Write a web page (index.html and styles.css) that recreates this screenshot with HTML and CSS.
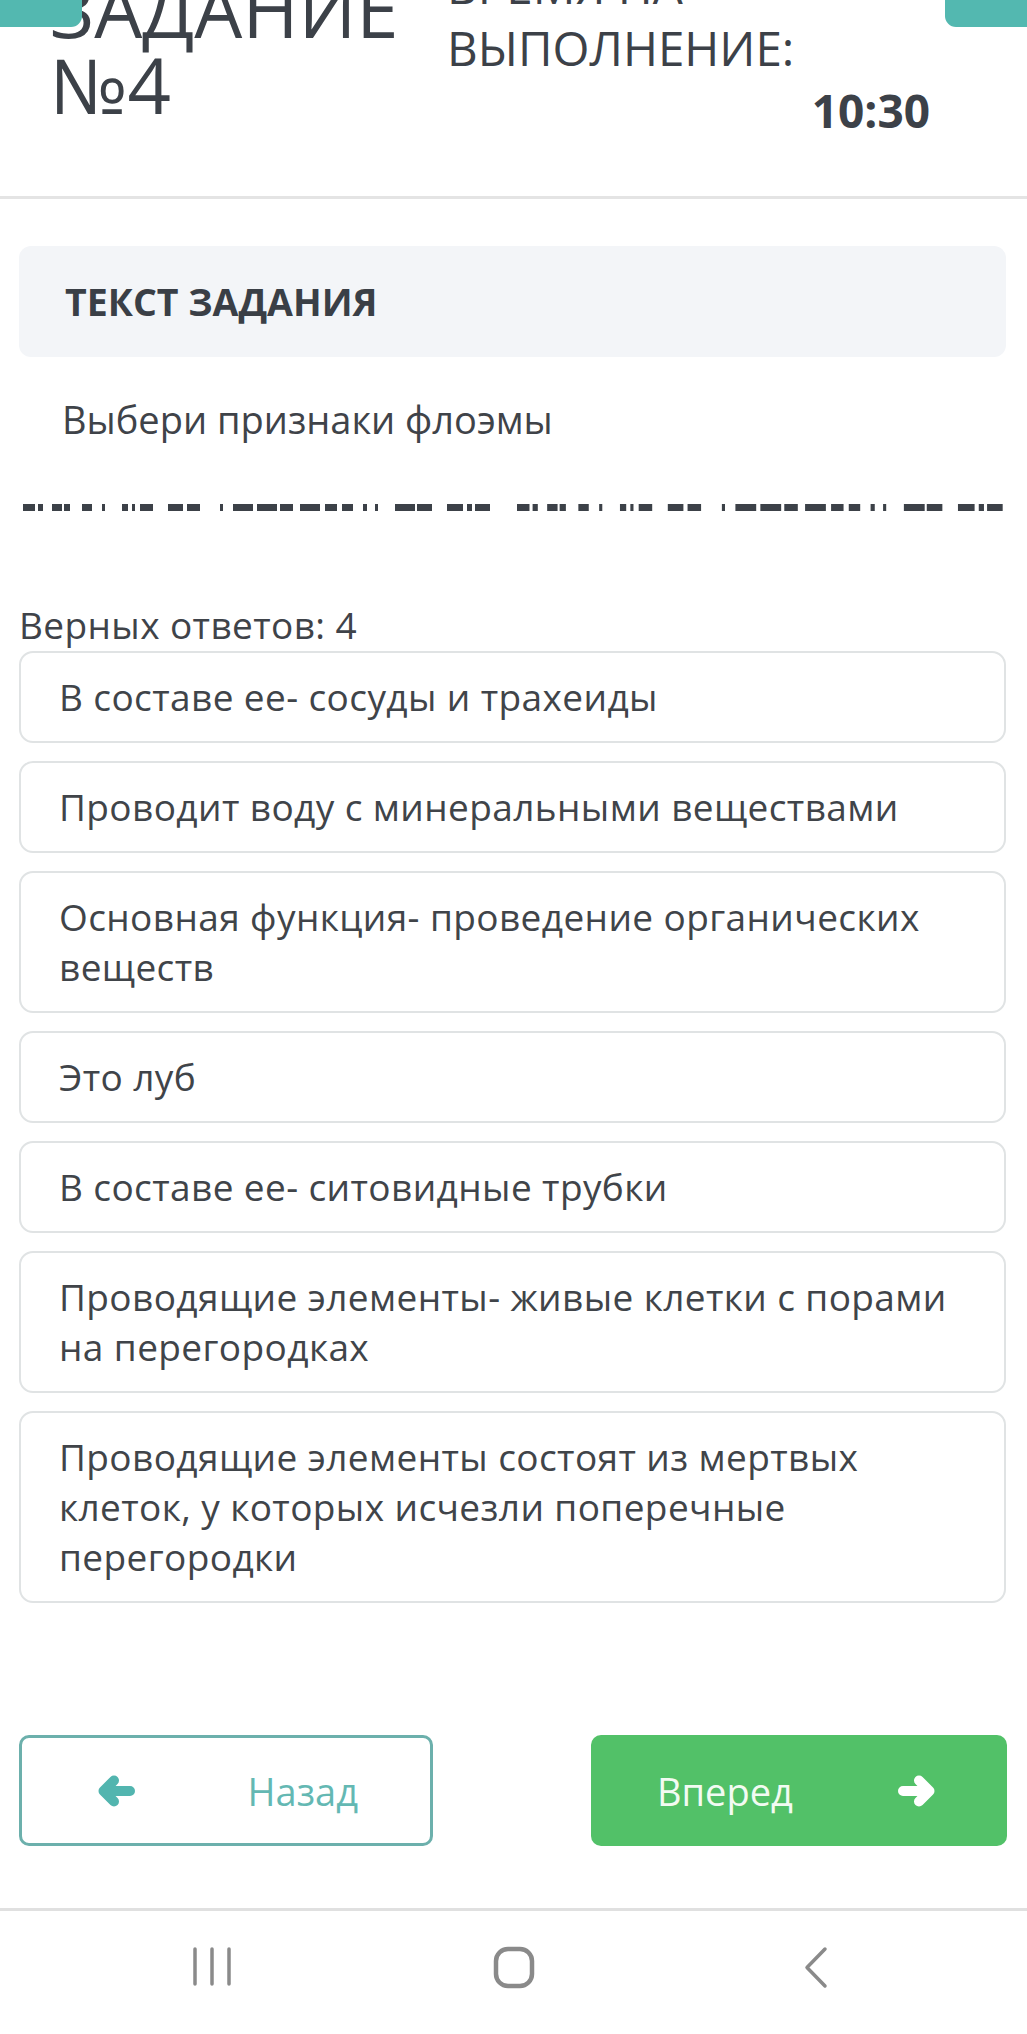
FILE: index.html
```html
<!DOCTYPE html>
<html lang="ru">
<head>
<meta charset="utf-8">
<title>Задание №4</title>
<link rel="stylesheet" href="styles.css">
</head>
<body>
<div class="corner corner-left"></div>
<div class="corner corner-right"></div>
<header class="header">
  <h1 class="title">ЗАДАНИЕ<br>№4</h1>
  <div class="timer">
    <div class="timer-label">ВРЕМЯ НА<br>ВЫПОЛНЕНИЕ:</div>
    <div class="timer-value">10:30</div>
  </div>
</header>
<main class="content">
  <section class="task-head">ТЕКСТ ЗАДАНИЯ</section>
  <p class="question">Выбери признаки флоэмы</p>
  <div class="blank">
    <svg width="1027" height="7" viewBox="0 0 1027 7">
      <g id="dash" fill="#3c4148">
        <rect x="23" y="0" width="12" height="7"/>
        <rect x="38" y="0" width="5" height="7"/>
        <rect x="52" y="0" width="10" height="7"/>
        <rect x="64" y="0" width="6" height="7"/>
        <rect x="82" y="0" width="10" height="7"/>
        <rect x="102" y="0" width="3" height="7"/>
        <rect x="122" y="0" width="6" height="7"/>
        <rect x="132" y="0" width="3" height="7"/>
        <rect x="140" y="0" width="13" height="7"/>
        <rect x="168" y="0" width="15" height="7"/>
        <rect x="187" y="0" width="13" height="7"/>
        <rect x="220" y="0" width="3" height="7"/>
        <rect x="233" y="0" width="20" height="7"/>
        <rect x="257" y="0" width="20" height="7"/>
        <rect x="280" y="0" width="13" height="7"/>
        <rect x="300" y="0" width="20" height="7"/>
        <rect x="325" y="0" width="12" height="7"/>
        <rect x="342" y="0" width="11" height="7"/>
        <rect x="363" y="0" width="4" height="7"/>
        <rect x="375" y="0" width="3" height="7"/>
        <rect x="395" y="0" width="20" height="7"/>
        <rect x="417" y="0" width="15" height="7"/>
        <rect x="447" y="0" width="16" height="7"/>
        <rect x="467" y="0" width="5" height="7"/>
        <rect x="475" y="0" width="15" height="7"/>
      </g>
      <use href="#dash" transform="translate(517 0) scale(1.04 1) translate(-23 0)"/>
    </svg>
  </div>
  <div class="count">Верных ответов: 4</div>
  <ul class="answers">
    <li class="answer">В составе ее- сосуды и трахеиды</li>
    <li class="answer">Проводит воду с минеральными веществами</li>
    <li class="answer">Основная функция- проведение органических веществ</li>
    <li class="answer">Это луб</li>
    <li class="answer">В составе ее- ситовидные трубки</li>
    <li class="answer">Проводящие элементы- живые клетки с порами на перегородках</li>
    <li class="answer">Проводящие элементы состоят из мертвых клеток, у которых исчезли поперечные перегородки</li>
  </ul>
  <div class="nav-buttons">
    <button class="btn btn-back">
      <svg class="arrow" width="37" height="32" viewBox="0 0 37 32"><path d="M32 16H5.5M16 5.5L5.5 16L16 26.5" fill="none" stroke="#52b5af" stroke-width="10" stroke-linecap="round" stroke-linejoin="round"/></svg>
      <span>Назад</span>
    </button>
    <button class="btn btn-next">
      <span>Вперед</span>
      <svg class="arrow" width="37" height="32" viewBox="0 0 37 32"><path d="M5 16H31.5M21 5.5L31.5 16L21 26.5" fill="none" stroke="#ffffff" stroke-width="10" stroke-linecap="round" stroke-linejoin="round"/></svg>
    </button>
  </div>
</main>
<footer class="sysbar">
  <div class="sys-icon">
    <svg width="40" height="41" viewBox="0 0 40 41"><path d="M3 3V38M20 3V38M37 3V38" stroke="#8a8a8a" stroke-width="3.5" stroke-linecap="round"/></svg>
  </div>
  <div class="sys-icon">
    <svg width="42" height="43" viewBox="0 0 42 43"><rect x="3" y="3" width="36" height="37" rx="12" fill="none" stroke="#8a8a8a" stroke-width="4.5"/></svg>
  </div>
  <div class="sys-icon">
    <svg width="26" height="43" viewBox="0 0 26 43"><path d="M22 3L4 21.5L22 40" fill="none" stroke="#8a8a8a" stroke-width="3.5" stroke-linecap="round" stroke-linejoin="round"/></svg>
  </div>
</footer>
</body>
</html>
```
FILE: styles.css
```css
* { box-sizing: border-box; }
html, body { margin: 0; padding: 0; background: #ffffff; }
body {
  font-family: "Open Sans", "Noto Sans", sans-serif;
  color: #3c4148;
  width: 1027px;
  height: 2034px;
  overflow: hidden;
  position: relative;
}
.corner {
  position: absolute;
  top: 0;
  height: 27px;
  background: #53b8b0;
  z-index: 2;
}
.corner-left { left: 0; width: 82px; border-bottom-right-radius: 11px; }
.corner-right { right: 0; width: 82px; border-bottom-left-radius: 11px; }

.header {
  margin-top: -45px;
  height: 244px;
  border-bottom: 3px solid #e4e4e4;
  display: grid;
  grid-template-columns: 397px 483px;
  padding-left: 50px;
  align-items: start;
}
.title {
  margin: 0;
  padding-top: 16px;
  font-size: 76px;
  line-height: 76px;
  font-weight: 400;
  color: #3c4148;
}
.timer { display: flex; flex-direction: column; }
.timer-label { font-size: 47.5px; line-height: 62px; }
.timer-value {
  font-size: 46px;
  line-height: 62px;
  font-weight: 700;
  text-align: right;
}

.content { display: flex; flex-direction: column; }
.task-head {
  margin: 47px 21px 0 19px;
  height: 111px;
  background: #f3f5f8;
  border-radius: 12px;
  display: flex;
  align-items: center;
  padding-left: 46px;
  font-size: 37.5px;
  font-weight: 700;
  color: #3a3f46;
}
.question {
  margin: 36px 0 0 62px;
  font-size: 38px;
  line-height: 53px;
  color: #3f4349;
}
.blank { margin-top: 58px; height: 7px; line-height: 0; }
.blank svg { display: block; }
.count {
  margin-top: 89px;
  padding-left: 19px;
  font-size: 37px;
  letter-spacing: 0.4px;
  line-height: 50px;
  color: #3f4349;
}
.answers {
  list-style: none;
  margin: 1px 21px 0 19px;
  padding: 0;
  display: flex;
  flex-direction: column;
  gap: 18px;
}
.answer {
  border: 2px solid #e0e3e4;
  border-radius: 14px;
  padding: 19px 30px 19px 38px;
  font-size: 37px;
  letter-spacing: 0.4px;
  line-height: 50px;
  color: #404449;
}
.nav-buttons {
  margin: 132px 20px 0 19px;
  display: flex;
  justify-content: space-between;
}
.btn {
  width: 414px;
  height: 111px;
  border-radius: 10px;
  display: flex;
  align-items: center;
  justify-content: space-between;
  font-family: "Open Sans", "Noto Sans", sans-serif;
  font-size: 38px;
  cursor: pointer;
}
.btn-back {
  background: #ffffff;
  border: 3px solid #6cb0ac;
  color: #64b8b3;
  padding: 0 72px 0 76px;
}
.btn-next {
  background: #52c168;
  border: none;
  color: #f2fbf2;
  padding: 0 72px 0 66px;
  width: 416px;
}
.arrow { display: block; }

.sysbar {
  margin-top: 62px;
  border-top: 3px solid #e0e0e0;
  height: 126px;
  display: flex;
  justify-content: center;
  gap: 202px;
  padding-top: 35px;
}
.sys-icon {
  width: 100px;
  display: flex;
  justify-content: center;
  align-items: flex-start;
}
.sys-icon svg { display: block; }
```
